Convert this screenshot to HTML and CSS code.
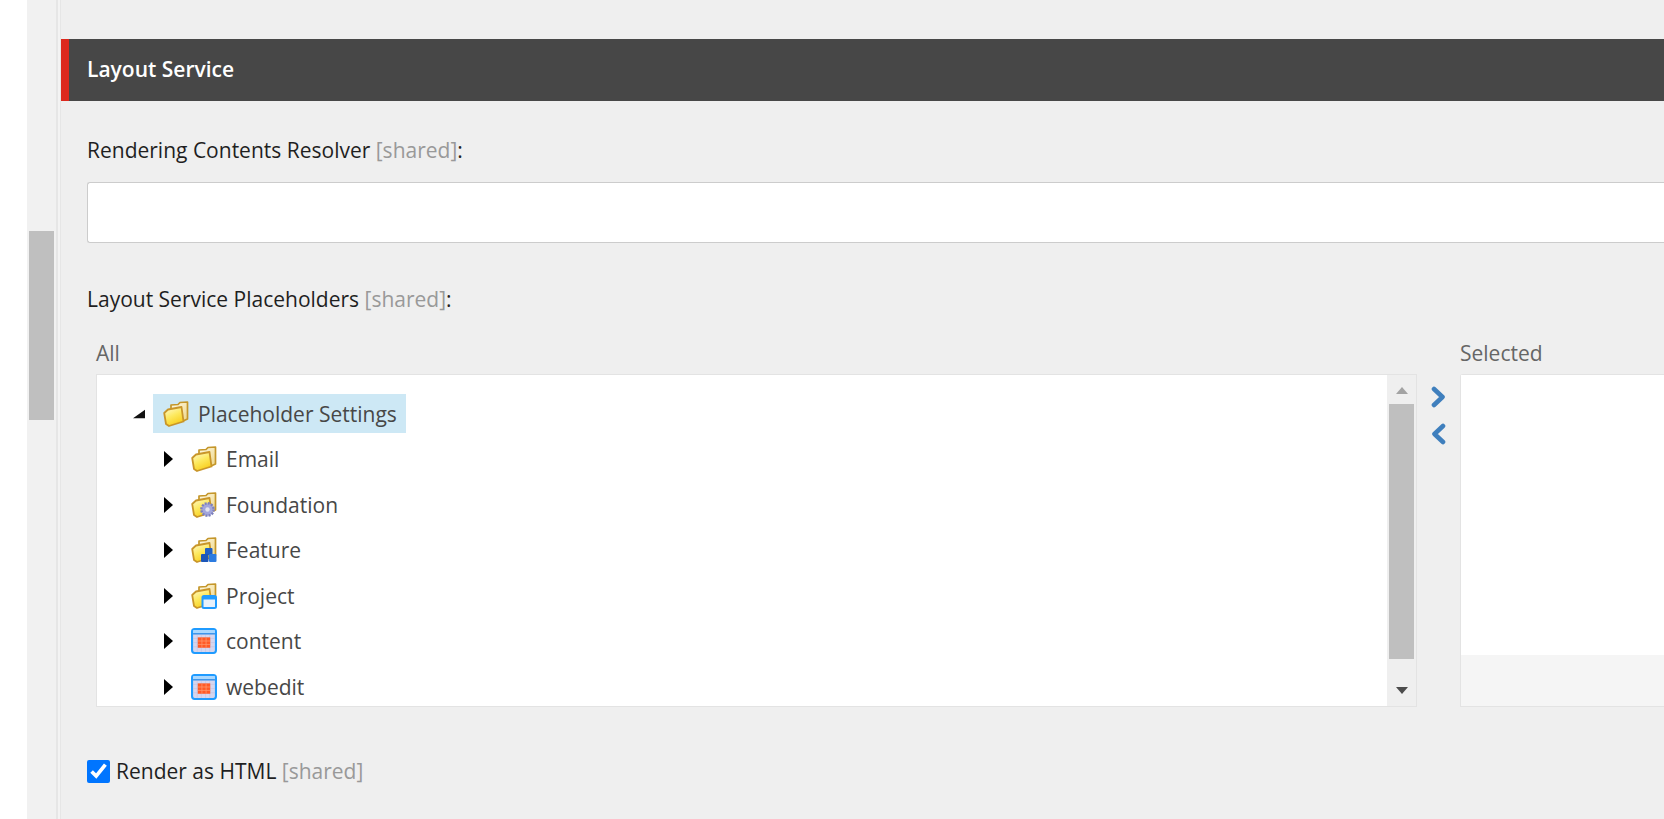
FILE: index.html
```html
<!DOCTYPE html>
<html lang="en">
<head>
    <meta charset="UTF-8">
    <meta name="viewport" content="width=device-width, initial-scale=1.0">
    <title>Layout Service</title>
    <link rel="stylesheet" href="styles.css">
</head>
<body>

<svg class="icon-defs" width="0" height="0">
    <defs>
        <linearGradient id="folder-fill" x1="0" y1="0" x2="0.5" y2="1">
            <stop offset="0" stop-color="#fffbd8"/>
            <stop offset="0.55" stop-color="#fde95e"/>
            <stop offset="1" stop-color="#f8cf1e"/>
        </linearGradient>
        <linearGradient id="folder-back" x1="0" y1="0" x2="1" y2="1">
            <stop offset="0" stop-color="#fffbe6"/>
            <stop offset="1" stop-color="#eed68a"/>
        </linearGradient>
        <symbol id="folder" viewBox="0 0 26 26">
            <path d="M8 8 L8 4 L15 3.5 L17 1.5 L24.5 1 L24.5 18 L20 20 Z" fill="url(#folder-back)" stroke="#c4962a" stroke-width="1.7" stroke-linejoin="round"/>
            <path d="M1.2 12 L5 8.5 L18.5 6 L20.5 20.5 L6 25 L3 23 Z" fill="url(#folder-fill)" stroke="#c9962a" stroke-width="1.8" stroke-linejoin="round"/>
        </symbol>
        <symbol id="calendar" viewBox="0 0 25 25">
            <rect x="1" y="1" width="23" height="23" rx="2.5" fill="#d6d6ee" stroke="#1f9bff" stroke-width="2"/>
            <rect x="2" y="2" width="21" height="3" fill="#a9d8ff"/>
            <rect x="2" y="5" width="21" height="1.2" fill="#1f86e6"/>
            <path d="M2 10h21M2 14h21M2 18h21M6 7v16M10 7v16M14 7v16M18 7v16" stroke="#c1c1e2" stroke-width="0.6"/>
            <rect x="6.5" y="9" width="12" height="10" fill="#ff5a26"/>
            <path d="M10.5 9v10M14.5 9v10M6.5 12.5h12M6.5 15.8h12" stroke="#ff9a70" stroke-width="0.7"/>
        </symbol>
    </defs>
</svg>

<div class="page">
    <div class="rail-blank"></div>
    <div class="rail-scroll"><div class="rail-thumb"></div></div>
    <div class="rail-divider"></div>

    <main class="content">
        <h2 class="section-bar">Layout Service</h2>

        <div class="field">
            <div class="field-label">Rendering Contents Resolver <span class="shared">[shared]</span>:</div>
            <input class="text-input" type="text">
        </div>

        <div class="field field-list">
            <div class="field-label">Layout Service Placeholders <span class="shared">[shared]</span>:</div>

            <div class="treelist">
                <div class="tree-col">
                    <div class="col-title">All</div>
                    <div class="tree-box">
                        <div class="tree-scroll">
                            <div class="tree-row tree-root">
                                <span class="arrow-open"></span>
                                <span class="tree-selected">
                                    <svg class="tree-icon"><use href="#folder"/></svg>
                                    <span>Placeholder Settings</span>
                                </span>
                            </div>
                            <div class="tree-row">
                                <span class="arrow-closed"></span>
                                <svg class="tree-icon"><use href="#folder"/></svg>
                                <span>Email</span>
                            </div>
                            <div class="tree-row">
                                <span class="arrow-closed"></span>
                                <svg class="tree-icon" viewBox="0 0 26 26">
                                    <use href="#folder" width="26" height="26"/>
                                    <circle cx="16.5" cy="17.5" r="6.2" fill="#a3a6dc" stroke="#7d80bd" stroke-width="2.4" stroke-dasharray="2 1.2"/>
                                    <circle cx="16.5" cy="17.5" r="2.2" fill="#e4e4ee"/>
                                </svg>
                                <span>Foundation</span>
                            </div>
                            <div class="tree-row">
                                <span class="arrow-closed"></span>
                                <svg class="tree-icon" viewBox="0 0 26 26">
                                    <use href="#folder" width="26" height="26"/>
                                    <rect x="14" y="11" width="7.5" height="7" rx="1" fill="#1f5fc4"/>
                                    <rect x="10" y="17" width="7.5" height="8" rx="1" fill="#1b56b8"/>
                                    <rect x="18" y="17" width="7.5" height="8" rx="1" fill="#2c7be0"/>
                                </svg>
                                <span>Feature</span>
                            </div>
                            <div class="tree-row">
                                <span class="arrow-closed"></span>
                                <svg class="tree-icon" viewBox="0 0 26 26">
                                    <use href="#folder" width="26" height="26"/>
                                    <rect x="11.5" y="13" width="13.5" height="12" rx="1.5" fill="#e8f1fb" stroke="#1f9bff" stroke-width="2"/>
                                    <rect x="12" y="14" width="12" height="2.5" fill="#1f9bff"/>
                                </svg>
                                <span>Project</span>
                            </div>
                            <div class="tree-row">
                                <span class="arrow-closed"></span>
                                <svg class="tree-icon"><use href="#calendar"/></svg>
                                <span>content</span>
                            </div>
                            <div class="tree-row">
                                <span class="arrow-closed"></span>
                                <svg class="tree-icon"><use href="#calendar"/></svg>
                                <span>webedit</span>
                            </div>
                        </div>
                        <div class="scrollbar">
                            <span class="scroll-up"></span>
                            <div class="scroll-thumb"></div>
                            <span class="scroll-down"></span>
                        </div>
                    </div>
                </div>

                <div class="move-btns">
                    <svg class="move-icon" viewBox="0 0 15 22"><path d="M3 3 L11.5 11 L3 19" /></svg>
                    <svg class="move-icon" viewBox="0 0 15 22"><path d="M12 3 L3.5 11 L12 19" /></svg>
                </div>

                <div class="selected-col">
                    <div class="col-title">Selected</div>
                    <div class="selected-box">
                        <div class="selected-list"></div>
                        <div class="selected-foot"></div>
                    </div>
                </div>
            </div>
        </div>

        <label class="check-field">
            <input type="checkbox" checked>
            <span>Render as HTML <span class="shared">[shared]</span></span>
        </label>
    </main>
</div>

</body>
</html>
```

FILE: styles.css
```css
html, body {
    margin: 0;
    padding: 0;
    height: 100%;
    overflow: hidden;
}
body {
    font-family: "Open Sans", Arial, sans-serif;
    font-size: 21px;
    background-color: #efefef;
    color: #1f1f1f;
}
.icon-defs {
    position: absolute;
}
.page {
    display: flex;
    height: 819px;
}
.rail-blank {
    width: 27px;
    background-color: white;
    flex: none;
}
.rail-scroll {
    width: 29px;
    flex: none;
    background-color: #f1f1f1;
    padding-top: 231px;
    box-sizing: border-box;
}
.rail-thumb {
    width: 25px;
    height: 189px;
    margin-left: 2px;
    background-color: #bfbfbf;
}
.rail-divider {
    width: 5px;
    flex: none;
    box-sizing: border-box;
    background-color: #f3f3f3;
    border-left: 2px solid #e6e6e6;
    border-right: 1px solid #e6e6e6;
}
.content {
    flex: 1;
    min-width: 0;
    padding-top: 39px;
}
.section-bar {
    margin: 0;
    height: 62px;
    line-height: 60px;
    box-sizing: border-box;
    padding-left: 18px;
    background-color: #474747;
    border-left: 8px solid #dc291e;
    color: white;
    font-size: 21px;
    font-weight: 600;
}
.field {
    padding: 35px 0 0 26px;
}
.field-label {
    line-height: 28px;
    height: 28px;
    white-space: nowrap;
}
.shared {
    color: #999;
}
.text-input {
    display: block;
    box-sizing: border-box;
    width: 100%;
    height: 61px;
    margin-top: 18px;
    background-color: white;
    border: 1px solid #ccc;
    border-right: none;
    border-radius: 3px 0 0 3px;
}
.field-list {
    padding-top: 42px;
}
.treelist {
    display: flex;
    margin: 27px 0 0 9px;
}
.tree-col {
    width: 1321px;
    flex: none;
}
.col-title {
    height: 34px;
    line-height: 26px;
    color: #666;
}
.tree-box {
    display: flex;
    height: 333px;
    box-sizing: border-box;
    background-color: white;
    border: 1px solid #e3e3e3;
}
.tree-scroll {
    flex: 1;
    min-width: 0;
    overflow: hidden;
    padding: 19px 0 0 36px;
    color: #474747;
}
.tree-row {
    display: flex;
    align-items: center;
    height: 45.6px;
    margin-left: 30px;
    white-space: nowrap;
}
.tree-root {
    height: 39px;
    margin: 0 0 3.3px;
}
.arrow-open {
    width: 0;
    height: 0;
    margin-right: 8px;
    border-style: solid;
    border-width: 0 0 12px 12px;
    border-color: transparent transparent #111 transparent;
    transform: scale(1, 0.72);
}
.arrow-closed {
    width: 0;
    height: 0;
    margin-left: 1px;
    margin-right: 18px;
    border-style: solid;
    border-width: 8px 0 8px 9px;
    border-color: transparent transparent transparent black;
}
.tree-selected {
    display: flex;
    align-items: center;
    height: 39px;
    padding: 0 9px 0 10px;
    background-color: #cde8f5;
}
.tree-icon {
    width: 26px;
    height: 26px;
    margin-right: 9px;
    flex: none;
}
.scrollbar {
    width: 29px;
    flex: none;
    display: flex;
    flex-direction: column;
    align-items: center;
    box-sizing: border-box;
    background-color: #efefef;
    padding-top: 12px;
}
.scroll-up {
    width: 0;
    height: 0;
    border-style: solid;
    border-width: 0 6.5px 7px 6.5px;
    border-color: transparent transparent #a3a3a3 transparent;
}
.scroll-thumb {
    width: 25px;
    height: 255px;
    margin: 10px 0 28px;
    background-color: #bfbfbf;
}
.scroll-down {
    width: 0;
    height: 0;
    border-style: solid;
    border-width: 7px 6.5px 0 6.5px;
    border-color: #4c4c4c transparent transparent transparent;
}
.move-btns {
    width: 43px;
    flex: none;
    display: flex;
    flex-direction: column;
    align-items: center;
    gap: 15px;
    padding-top: 46px;
    box-sizing: border-box;
}
.move-icon {
    width: 15px;
    height: 22px;
    fill: none;
    stroke: #3f7fbd;
    stroke-width: 4.6;
    stroke-linejoin: round;
    stroke-linecap: round;
}
.selected-col {
    flex: 1;
    min-width: 0;
}
.selected-box {
    display: flex;
    flex-direction: column;
    height: 333px;
    box-sizing: border-box;
    border: 1px solid #e3e3e3;
    border-right: none;
    border-top-left-radius: 3px;
    background-color: #f5f5f5;
}
.selected-list {
    height: 280px;
    background-color: white;
}
.selected-foot {
    flex: 1;
}
.check-field {
    display: flex;
    align-items: center;
    gap: 6px;
    margin: 52px 0 0 26px;
    height: 24px;
}
.check-field input {
    width: 23px;
    height: 23px;
    margin: 0;
}
```
